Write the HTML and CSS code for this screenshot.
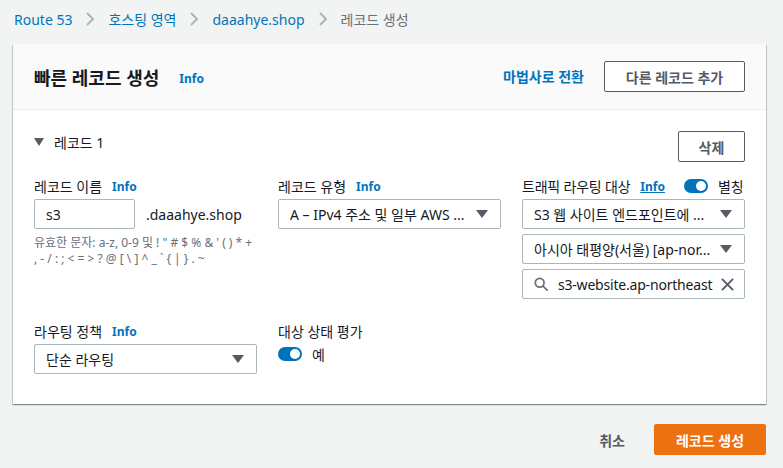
FILE: index.html
```html
<!DOCTYPE html>
<html lang="ko">
<head>
<meta charset="utf-8">
<link rel="stylesheet" href="styles.css">
</head>
<body>
<nav class="crumbs">
  <a class="crumb-link">Route 53</a>
  <svg class="chev" viewBox="0 0 8 14" width="8" height="14"><path d="M1 1l6 6-6 6" fill="none" stroke="#aab7b8" stroke-width="2"/></svg>
  <a class="crumb-link">호스팅 영역</a>
  <svg class="chev" viewBox="0 0 8 14" width="8" height="14"><path d="M1 1l6 6-6 6" fill="none" stroke="#aab7b8" stroke-width="2"/></svg>
  <a class="crumb-link">daaahye.shop</a>
  <svg class="chev" viewBox="0 0 8 14" width="8" height="14"><path d="M1 1l6 6-6 6" fill="none" stroke="#aab7b8" stroke-width="2"/></svg>
  <span class="crumb-cur">레코드 생성</span>
</nav>

<section class="card">
  <header class="card-head">
    <h1 class="title">빠른 레코드 생성</h1>
    <a class="info info-title">Info</a>
    <span class="spacer"></span>
    <a class="wizard">마법사로 전환</a>
    <button class="btn btn-add">다른 레코드 추가</button>
  </header>
  <div class="card-body">
    <div class="rec-head">
      <div class="rec-title">
        <svg class="tri" viewBox="0 0 10 8" width="10" height="8"><path d="M0 0h10L5 8z" fill="#545b64"/></svg>
        <span>레코드 1</span>
      </div>
      <button class="btn btn-del">삭제</button>
    </div>

    <div class="grid">
      <div class="field">
        <div class="label">레코드 이름 <a class="info">Info</a></div>
        <div class="name-row">
          <div class="input input-name">s3</div>
          <span class="suffix">.daaahye.shop</span>
        </div>
        <p class="hint">유효한 문자: a-z, 0-9 및 ! " # $ % &amp; ' ( ) * +<br>, - / : ; &lt; = &gt; ? @ [ \ ] ^ _ ` { | } . ~</p>
      </div>

      <div class="field">
        <div class="label">레코드 유형 <a class="info">Info</a></div>
        <div class="select"><span class="sel-text">A – IPv4 주소 및 일부 AWS ...</span><svg class="caret" viewBox="0 0 12 8" width="12" height="8"><path d="M0 0h12L6 8z" fill="#545b64"/></svg></div>
      </div>

      <div class="field">
        <div class="label label-3"><span class="lbl-text">트래픽 라우팅 대상</span><a class="info info-u">Info</a><span class="toggle toggle-alias"><span class="knob"></span></span><span class="toggle-text">별칭</span></div>
        <div class="stack">
          <div class="select"><span class="sel-text">S3 웹 사이트 엔드포인트에 ...</span><svg class="caret" viewBox="0 0 12 8" width="12" height="8"><path d="M0 0h12L6 8z" fill="#545b64"/></svg></div>
          <div class="select"><span class="sel-text">아시아 태평양(서울) [ap-nor...</span><svg class="caret" viewBox="0 0 12 8" width="12" height="8"><path d="M0 0h12L6 8z" fill="#545b64"/></svg></div>
          <div class="select search">
            <svg class="mag" viewBox="0 0 16 16" width="14" height="14"><circle cx="6.5" cy="6.5" r="5" fill="none" stroke="#687078" stroke-width="2"/><path d="M10.3 10.3L15 15" stroke="#687078" stroke-width="2" stroke-linecap="round"/></svg>
            <span class="search-text">s3-website.ap-northeast</span>
            <svg class="x" viewBox="0 0 14 14" width="13" height="13"><path d="M1 1l12 12M13 1L1 13" stroke="#545b64" stroke-width="2"/></svg>
          </div>
        </div>
      </div>

      <div class="field">
        <div class="label">라우팅 정책 <a class="info">Info</a></div>
        <div class="select select-wide"><span class="sel-text">단순 라우팅</span><svg class="caret" viewBox="0 0 12 8" width="12" height="8"><path d="M0 0h12L6 8z" fill="#545b64"/></svg></div>
      </div>

      <div class="field">
        <div class="label">대상 상태 평가</div>
        <div class="toggle-row"><span class="toggle"><span class="knob"></span></span><span class="toggle-text">예</span></div>
      </div>
    </div>
  </div>
</section>

<footer class="actions">
  <a class="cancel">취소</a>
  <button class="btn btn-primary">레코드 생성</button>
</footer>
</body>
</html>
```

FILE: styles.css
```css
* { box-sizing: border-box; }
html, body { margin: 0; padding: 0; }
body {
  background: #f2f3f3;
  font-family: "Noto Sans", "Noto Sans CJK KR", sans-serif;
  font-size: 14px;
  color: #16191f;
  width: 783px;
  height: 468px;
  overflow: hidden;
}
.crumbs {
  display: flex;
  align-items: center;
  height: 38px;
  padding: 0 14px;
  gap: 14px;
  font-size: 14px;
}
.crumb-link { color: #0073bb; }
.crumb-cur { color: #687078; }
.chev { display: block; }

.card {
  margin: 6px 17px 0 13px;
  background: #fff;
  box-shadow: 0 1px 1px 0 rgba(0,28,36,.3), 1px 1px 1px 0 rgba(0,28,36,.15), -1px 1px 1px 0 rgba(0,28,36,.15);
}
.card-head {
  display: flex;
  align-items: center;
  height: 66px;
  padding: 0 21px;
  background: #fafafa;
  border-bottom: 1px solid #eaeded;
}
.title {
  margin: 0;
  font-size: 18px;
  font-weight: 700;
  color: #16191f;
}
.info {
  color: #0073bb;
  font-size: 12px;
  font-weight: 700;
}
.info-title { margin-left: 20px; margin-top: 4px; }
.info-u { text-decoration: underline; }
.spacer { flex: 1; }
.wizard {
  color: #0073bb;
  font-weight: 700;
  font-size: 14px;
  margin-right: 20px;
  margin-top: -2px;
}
.btn {
  font-family: inherit;
  font-weight: 700;
  font-size: 14px;
  color: #545b64;
  background: #fff;
  border: 1px solid #545b64;
  border-radius: 2px;
  height: 31px;
  padding: 0 20px;
  cursor: pointer;
}
.btn-add { width: 141px; padding: 0; }
.card-body { padding: 21px 21px 30px 21px; }
.rec-head {
  display: flex;
  align-items: center;
  justify-content: space-between;
}
.rec-title {
  display: flex;
  align-items: center;
  gap: 10px;
  font-size: 14px;
  margin-top: -10px;
}
.tri { display: block; }
.btn-del { width: 67px; padding: 0; }

.grid {
  display: grid;
  grid-template-columns: 223px 223px 223px;
  column-gap: 21px;
  row-gap: 22px;
  margin-top: 14px;
}
.field { display: flex; flex-direction: column; }
.label {
  display: flex;
  align-items: center;
  height: 20px;
  font-size: 14px;
  color: #16191f;
  margin-bottom: 3px;
  white-space: nowrap;
}
.label .info { margin-left: 10px; }
.label-3 .lbl-text { letter-spacing: -0.2px; }
.toggle {
  position: relative;
  display: inline-block;
  flex: none;
  width: 24px;
  height: 14px;
  border-radius: 7px;
  background: #0073bb;
}
.knob {
  position: absolute;
  right: 2px;
  top: 2px;
  width: 10px;
  height: 10px;
  border-radius: 50%;
  background: #fff;
}
.toggle-alias { margin-left: 19px; }
.toggle-text { margin-left: 10px; }
.name-row { display: flex; align-items: center; }
.input {
  border: 1px solid #aab7b8;
  border-radius: 2px;
  height: 30px;
  display: flex;
  align-items: center;
  padding: 0 11px;
}
.input-name { width: 101px; }
.suffix { margin-left: 11px; }
.hint {
  margin: 6px 0 0 0;
  font-size: 12px;
  line-height: 16px;
  color: #687078;
  white-space: nowrap;
}
.select {
  display: flex;
  align-items: center;
  height: 30px;
  border: 1px solid #aab7b8;
  border-radius: 2px;
  padding: 0 12px 0 11px;
}
.sel-text {
  flex: 1;
  white-space: nowrap;
  overflow: hidden;
}
.caret { display: block; flex: none; margin-left: 8px; }
.stack { display: flex; flex-direction: column; gap: 5px; }
.search { padding-right: 10px; }
.search .mag { flex: none; margin-right: 10px; }
.search-text {
  flex: 1;
  white-space: nowrap;
  letter-spacing: -0.2px;
}
.search .x { flex: none; margin-left: 4px; }
.toggle-row { display: flex; align-items: center; height: 30px; margin-top: -5px; }

.actions {
  display: flex;
  justify-content: flex-end;
  align-items: center;
  gap: 29px;
  margin: 20px 17px 0 0;
}
.cancel { color: #545b64; font-weight: 700; font-size: 14px; }
.btn-primary {
  background: #ec7211;
  border-color: #ec7211;
  color: #fff;
  width: 112px;
  padding: 0;
}
```
